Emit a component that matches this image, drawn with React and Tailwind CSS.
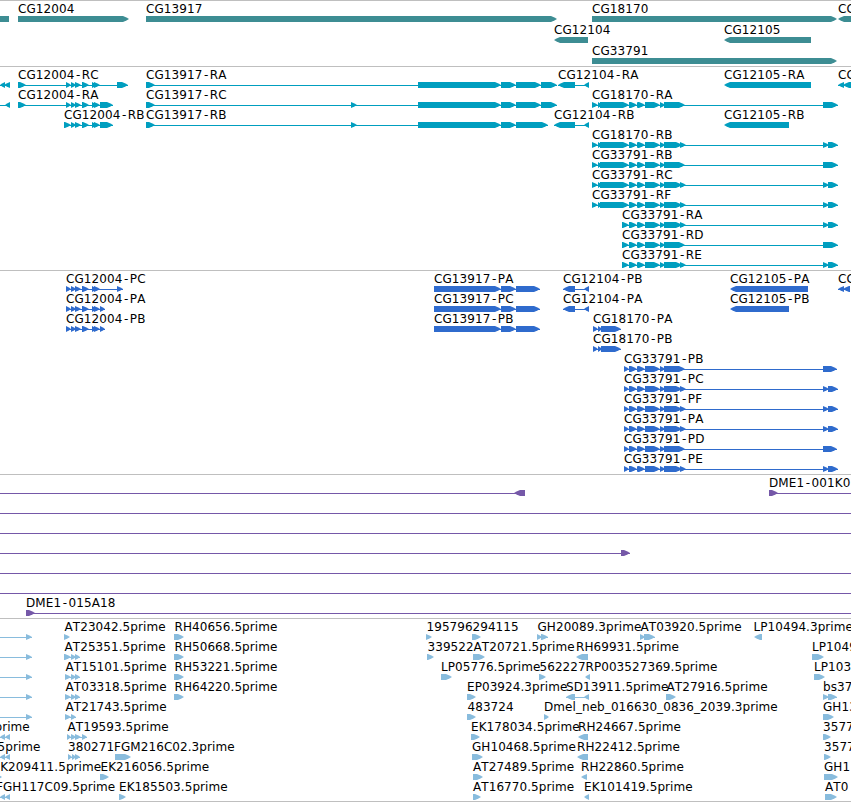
import clsx from "clsx";

// Exon spans shared by several transcripts / proteins: [start, end]
const ex12004 = [[71, 76], [75, 81], [82, 89], [92, 97], [94, 100]];
const ex18170 = [[592, 598], [598, 602], [600, 629]];
const ex33791 = [[629, 637], [637, 642], [638, 645], [645, 660], [660, 665]];
const tailLong = [[664, 685], [823, 838]];
const tailSplit = [[664, 682], [680, 686], [823, 829], [828, 838]];
const right12104 = [584, 589];

const f = (name, exons, opts = {}) => ({ name, exons, ...opts });
const rev = { rev: true };

const genes = [
  [
    f("", [[-10, 9]], { flat: true }),
    f("CG12004", [[18, 129]]),
    f("CG13917", [[146, 557]]),
    f("CG18170", [[592, 837]]),
    f("CG", [[838, 870]], rev),
  ],
  [f("CG12104", [[554, 588]], rev), f("CG12105", [[724, 811]], rev)],
  [f("CG33791", [[592, 837]])],
];

const transcripts = [
  [
    f("", [[0, 5], [4, 10]], rev),
    f("CG12004-RC", [[18, 26], [66, 71], ...ex12004, [117, 128]]),
    f("CG13917-RA", [[146, 155], [418, 501], [501, 516], [516, 541], [541, 557]]),
    f("CG12104-RA", [[558, 575], right12104], rev),
    f("CG12105-RA", [[724, 811]], rev),
    f("CG", [[838, 844], [843, 870]], rev),
  ],
  [
    f("", [[5, 10]], { rev: true, from: 0 }),
    f("CG12004-RA", [[18, 26], [66, 71], ...ex12004, [100, 113]]),
    f("CG13917-RC", [[146, 155], [351, 357], [418, 501], [501, 516], [516, 541], [541, 557]]),
    f("CG18170-RA", [...ex18170, ...ex33791, ...tailLong]),
  ],
  [
    f("CG12004-RB", [[64, 71], ...ex12004, [100, 113]]),
    f("CG13917-RB", [[146, 155], [351, 357], [418, 501], [501, 516], [516, 548]]),
    f("CG12104-RB", [[554, 575], right12104], rev),
    f("CG12105-RB", [[724, 789]], rev),
  ],
  [f("CG18170-RB", [...ex18170, ...ex33791, ...tailSplit])],
  [f("CG33791-RB", [...ex18170, ...ex33791, ...tailLong])],
  [f("CG33791-RC", [...ex18170, ...ex33791, ...tailSplit])],
  [f("CG33791-RF", [...ex18170, ...ex33791, ...tailSplit])],
  [f("CG33791-RA", [[622, 629], ...ex33791, ...tailSplit])],
  [f("CG33791-RD", [[622, 629], ...ex33791, ...tailLong])],
  [f("CG33791-RE", [[622, 629], ...ex33791, ...tailSplit])],
];

const ex13917p = [[434, 501], [501, 516], [516, 540]];
const ex18170p = [[593, 598], [598, 602], [601, 621]];

const proteins = [
  [
    f("CG12004-PC", [[66, 71], ...ex12004, [117, 123]]),
    f("CG13917-PA", ex13917p),
    f("CG12104-PB", [[563, 575], right12104], rev),
    f("CG12105-PA", [[730, 808]], rev),
    f("CG", [[838, 844], [843, 850]], rev),
  ],
  [
    f("CG12004-PA", [[66, 71], ...ex12004, [100, 105]]),
    f("CG13917-PC", ex13917p),
    f("CG12104-PA", [[563, 575], right12104], rev),
    f("CG12105-PB", [[730, 789]], rev),
  ],
  [
    f("CG12004-PB", [[66, 71], ...ex12004, [100, 105]]),
    f("CG13917-PB", ex13917p),
    f("CG18170-PA", ex18170p),
  ],
  [f("CG18170-PB", ex18170p)],
  [f("CG33791-PB", [[624, 629], ...ex33791, [664, 685], [823, 837]])],
  [f("CG33791-PC", [[624, 629], ...ex33791, ...tailSplit])],
  [f("CG33791-PF", [[624, 629], ...ex33791, ...tailSplit])],
  [f("CG33791-PA", [[624, 629], ...ex33791, ...tailSplit])],
  [f("CG33791-PD", [[624, 629], ...ex33791, [664, 685], [823, 837]])],
  [f("CG33791-PE", [[624, 629], ...ex33791, ...tailSplit])],
];

const fullLine = [f("", [], { from: 0, to: 851 })];

const bacs = [
  [
    f("", [[514, 525]], { rev: true, from: 0 }),
    f("DME1-001K0", [[769, 778]], { to: 851 }),
  ],
  fullLine,
  fullLine,
  [f("", [[621, 630]], { from: 0 })],
  fullLine,
  fullLine,
  [f("DME1-015A18", [[26, 35]], { to: 851 })],
];

const leftRead = f("", [[26, 32]], { from: 0 });

const ests = [
  [
    leftRead,
    f("AT23042.5prime", [[64, 70]]),
    f("RH40656.5prime", [[174, 184]]),
    f("195796", [[426, 432]]),
    f("294115", [[472, 481]]),
    f("GH20089.3prime", [[537, 542], [541, 548]]),
    f("AT03920.5prime", [[640, 645], [644, 655]]),
    f("LP10494.3prime", [[754, 762]], { rev: true, at: 753 }),
  ],
  [
    leftRead,
    f("AT25351.5prime", [[64, 71], [71, 76], [75, 80]]),
    f("RH50668.5prime", [[174, 184]]),
    f("339522", [[427, 434]]),
    f("AT20721.5prime", [[473, 485]]),
    f("RH69931.5prime", [[576, 588]], { rev: true, at: 575.5 }),
    f("LP1049", [[812, 824]], { at: 811.5 }),
  ],
  [
    leftRead,
    f("AT15101.5prime", [[65, 71], [71, 76], [75, 80]]),
    f("RH53221.5prime", [[174, 184]]),
    f("LP05776.5prime", [[441, 452]], { at: 440.5 }),
    f("562227", [[539, 546]]),
    f("RP003527369.5prime", [[585, 590]], { rev: true, at: 585 }),
    f("LP103", [[814, 825]], { at: 813.5 }),
  ],
  [
    leftRead,
    f("AT03318.5prime", [[65, 71], [71, 76], [75, 80]]),
    f("RH64220.5prime", [[174, 184]]),
    f("EP03924.3prime", [[467, 476]], { at: 466.5 }),
    f("SD13911.5prime", [[566, 575], right12104], { rev: true, at: 565.5 }),
    f("AT27916.5prime", [[666, 676]]),
    f("bs37", [[823, 829], [828, 837]], { at: 822.5 }),
  ],
  [
    leftRead,
    f("AT21743.5prime", [[65, 71], [71, 76]]),
    f("483724", [[467, 476]]),
    f("Dmel_neb_016630_0836_2039.3prime", [[544, 549]], { at: 543.5 }),
    f("GH13", [[823, 834]], { at: 822.5 }),
  ],
  [
    f("prime", [[0, 5], [5, 10]], { rev: true, at: -6 }),
    f("AT19593.5prime", [[67, 71], [71, 76], [75, 81], [82, 87]]),
    f("EK178034.5prime", [[471, 480]], { at: 470.5 }),
    f("RH24667.5prime", [[578, 588]], { rev: true, at: 577.5 }),
    f("3577", [[823, 831]], { at: 822.5 }),
  ],
  [
    f("5prime", [[0, 5], [5, 10]], { rev: true, at: -3 }),
    f("380271", [[68, 72], [72, 76], [75, 80]], { at: 67.5 }),
    f("FGM216C02.3prime", [[115, 131]], { at: 113.5 }),
    f("GH10468.5prime", [[472, 483]], { at: 471.5 }),
    f("RH22412.5prime", [[577, 588]], { rev: true, at: 576.5 }),
    f("3577", [[824, 831]], { at: 823.5 }),
  ],
  [
    f("EK209411.5prime", [[-6, 2]], { at: -8 }),
    f("EK216056.5prime", [[100, 109]], { at: 100 }),
    f("AT27489.5prime", [[473, 483]], { at: 472.5 }),
    f("RH22860.5prime", [[581, 587]], { rev: true, at: 580.5 }),
    f("GH1", [[824, 838]], { at: 823.5 }),
  ],
  [
    f("FGH117C09.5prime", [[0, 5], [5, 10]], { rev: true, at: -4.5 }),
    f("EK185503.5prime", [[119, 126]], { at: 118.5 }),
    f("AT16770.5prime", [[473, 481]], { at: 472.5 }),
    f("EK101419.5prime", [[584, 589]], { rev: true, at: 583.5 }),
    f("AT0", [[825, 837]], { at: 824.5 }),
  ],
];

const tracks = [
  { id: "genes", rows: genes, height: "h-[66px]", rowHeight: "h-[21px]", color: "text-[#3d8d93]" },
  { id: "transcripts", rows: transcripts, height: "h-[204px]", rowHeight: "h-5", color: "text-[#009ebf]" },
  { id: "proteins", rows: proteins, height: "h-[204px]", rowHeight: "h-5", color: "text-[#2f6bcd]" },
  { id: "bacs", rows: bacs, height: "h-[144px]", rowHeight: "h-5", color: "text-[#7558a8]" },
  { id: "ests", rows: ests, height: "h-[183px]", rowHeight: "h-5", color: "text-[#89bcdd]" },
];

// Block with a slightly rounded point on the side the feature is read towards
const Exon = ({ start, end, rev, flat }) => {
  const head = flat ? 0 : Math.min(6, end - start);
  const tip = rev ? start : end;
  const tail = rev ? end : start;
  const dir = rev ? -1 : 1;
  const neck = tip - dir * head;
  const mid = tip - dir * head * 0.42;
  const points = `${tail},15 ${neck},15 ${mid},16.4 ${tip},18 ${mid},19.6 ${neck},21 ${tail},21`;
  return <polygon points={points} fill="currentColor" />;
};

// The hyphen gets a little more room on both sides
const hyphenSpacing = (name) => {
  const i = name.indexOf("-");
  if (i < 0) return undefined;
  return [...name].map((_, n) => (n === i || n === i + 1 ? 1.5 : 0)).join(" ");
};

const Feature = ({ name, exons, rev, flat, from, to, at }) => {
  const lineStart = from ?? exons[0][0];
  const lineEnd = to ?? exons[exons.length - 1][1];
  const hasLine = exons.length !== 1 || from !== undefined || to !== undefined;
  // plain gene / transcript names sit flush with the glyph, read names half a pixel in
  const shift = name.startsWith("CG") || name.startsWith("DME") ? 0 : 0.5;

  return (
    <g>
      {hasLine && (
        <rect x={lineStart} y="18" width={lineEnd - lineStart} height="1" fill="currentColor" />
      )}
      {exons.map(([start, end]) => (
        <Exon key={start} start={start} end={end} rev={rev} flat={flat} />
      ))}
      {name && (
        <text
          x={(at ?? exons[0][0]) + shift}
          y="12"
          dx={hyphenSpacing(name)}
          className="fill-black font-['DejaVu_Sans',sans-serif] text-[12px] tracking-[0.07px] [font-kerning:none]"
        >
          {name}
        </text>
      )}
    </g>
  );
};

const Track = ({ rows, height, rowHeight, color }) => (
  <section className={clsx("border-t border-[#bfbfbf]", height, color)}>
    {rows.map((row, i) => (
      <svg key={i} className={clsx("block w-full overflow-visible", rowHeight)}>
        {row.map((feature, j) => (
          <Feature key={j} {...feature} />
        ))}
      </svg>
    ))}
  </section>
);

const App = () => {
  return (
    <main className="w-[851px] h-[802px] overflow-hidden bg-white border-b border-[#bfbfbf]">
      {tracks.map((track) => (
        <Track key={track.id} {...track} />
      ))}
    </main>
  );
};

export default App;
